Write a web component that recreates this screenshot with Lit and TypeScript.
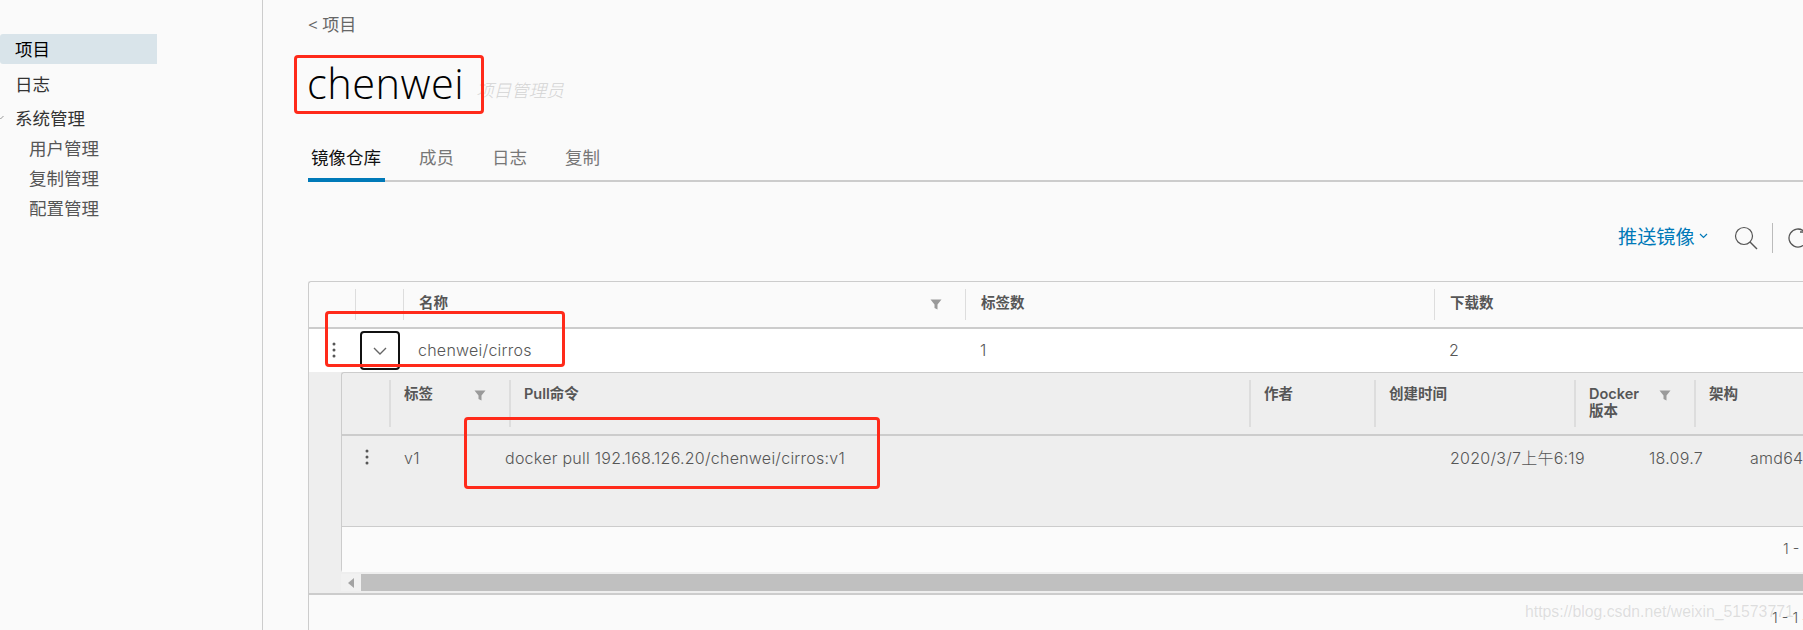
import { LitElement, html, css } from "lit";
import { customElement } from "lit/decorators.js";

const filter = html`<svg class="filter" width="12" height="12" viewBox="0 0 12 12"><path d="M0.5 1.5h11L7.5 6.5V11.5L4.5 10V6.5z" fill="#9a9a9a"/></svg>`;
const dots = html`<svg class="dots" width="4" height="16" viewBox="0 0 4 16"><circle cx="2" cy="2" r="1.5"/><circle cx="2" cy="8" r="1.5"/><circle cx="2" cy="14" r="1.5"/></svg>`;

@customElement("app-root")
export class AppRoot extends LitElement {
  static styles = css`
    :host {
      display: block;
      position: relative;
      width: 1803px;
      height: 630px;
      overflow: hidden;
      background: #fafafa;
      color: #565656;
      font-family: "Open Sans", "Noto Sans CJK SC", sans-serif;
    }
    .page { display: flex; height: 630px; }
    aside {
      flex: 0 0 262px;
      border-right: 1px solid #ccc;
      padding-top: 34px;
      font-size: 17.5px;
      color: #333;
    }
    .nav { height: 30px; width: 142px; padding-left: 15px; display: flex; align-items: center; position: relative; }
    .nav.active { background: #d9e4ea; border-radius: 3px 0 0 3px; color: #000; margin-bottom: 4px; height: 28px; padding-bottom: 2px; }
    .nav.gap { margin-bottom: 4px; height: 30px; }
    .nav.sub { padding-left: 29px; color: #565656; }
    .caret { position: absolute; left: -3px; top: 12px; }
    main { flex: 1; min-width: 0; padding-left: 45px; overflow: hidden; }
    .back { height: 46px; padding-bottom: 2px; display: flex; align-items: center; font-size: 17px; color: #666; }
    .title { height: 70px; display: flex; align-items: flex-start; }
    .title h1 { margin: 0 0 0 -1px; font-size: 41.5px; font-weight: 300; line-height: 70px; color: #000; letter-spacing: 0.5px; }
    .title em { font-size: 17.5px; line-height: 24px; font-weight: 300; color: #d4d4d4; margin: 30px 0 0 12px; }
    .tabs {
      display: flex;
      height: 62px;
      border-bottom: 2px solid #ccc;
      font-size: 17.5px;
      color: #777;
      align-items: stretch;
      margin-right: -4px;
    }
    .tab { padding: 26px 4px 0 3px; margin-right: 31px; }
    .tab.active { color: #111; border-bottom: 4px solid #0079b8; margin-bottom: -2px; margin-right: 31px; }
    .tools { height: 99px; position: relative; }
    .push { color: #0079b8; font-size: 19.2px; display: flex; align-items: center; gap: 4px; position: absolute; left: 1310px; top: 40px; }
    .toolicons { position: absolute; left: 1426px; top: 41px; display: flex; align-items: center; gap: 14px; }
    .vr { width: 1px; height: 30px; background: #bbb; }
    .table {
      width: 1600px;
      border: 1px solid #ccc;
      border-bottom: none;
      border-right: none;
      border-radius: 3px 0 0 0;
      height: 350px;
      font-family: "Inter", "Noto Sans CJK SC", sans-serif;
    }
    .outer-grid { display: grid; grid-template-columns: 46px 48px 562px 469px 1fr; }
    .inner-grid { display: grid; grid-template-columns: 47px 120px 740px 125px 200px 120px 1fr; }
    .head { height: 45px; font-weight: 700; font-size: 14.5px; color: #565656; border-bottom: 2px solid #ccc; }
    .hcell { margin: 7px 0; border-left: 1px solid #ddd; padding: 5px 23px 0 15px; display: flex; justify-content: space-between; line-height: 17px; }
    .hcell:first-child { border-left: none; }
    .hcell svg { margin-top: 4px; }
    .row { height: 43px; background: #fff; font-size: 16px; letter-spacing: 0.25px; font-weight: 300; align-items: center; padding-bottom: 2px; box-sizing: border-box; }
    .cell { padding-left: 15px; }
    .dots { fill: #565656; display: block; }
    .action { padding-left: 23px; }
    .toggle {
      box-sizing: border-box;
      margin-left: 5px;
      margin-top: 2px;
      width: 40px;
      height: 39px;
      border: 2px solid #111;
      border-radius: 4px;
      display: flex;
      align-items: center;
      justify-content: center;
    }
    .detail { background: #eee; padding-left: 32px; height: 223px; box-sizing: border-box; border-bottom: 2px solid #ccc; }
    .card { border: 1px solid #ccc; border-right: none; border-radius: 3px 0 0 3px; height: 200px; box-sizing: border-box; width: 1500px; }
    .ihead { height: 61px; font-weight: 600; font-size: 14.5px; border-bottom: 2px solid #ccc; }
    .ihead .hcell { border-left: 2px solid #ddd; padding-top: 5px; padding-left: 13px; }
    .ihead .hcell:first-child { border-left: none; }
    .irow { height: 91px; border-bottom: 1px solid #ccc; font-size: 16px; letter-spacing: 0.25px; font-weight: 300; padding-top: 13px; box-sizing: border-box; }
    .irow .cell { line-height: 18px; white-space: nowrap; }
    .irow .action { padding-left: 23px; }
    .cmd { margin-left: -4px; padding-left: 0 !important; }
    .c-time { padding-left: 76px !important; }
    .c-ver { padding-left: 75px !important; }
    .c-arch { padding-left: 56px !important; }
    .foot { height: 45px; background: #fbfbfb; font-size: 14.5px; font-weight: 300; padding: 10px 0 0 1441px; box-sizing: border-box; white-space: nowrap; }
    .bar { height: 17px; margin-top: 2px; display: flex; }
    .track { width: 20px; background: #f1f1f1; display: flex; align-items: center; justify-content: center; }
    .thumb { flex: 1; background: #c0c0c0; }
    .tfoot { font-size: 14.5px; font-weight: 300; padding: 11px 0 0 1463px; white-space: nowrap; }
    .mark { position: absolute; left: 1525px; top: 603px; font-size: 15.8px; color: rgba(120, 120, 120, 0.22); font-family: "Liberation Sans", sans-serif; }
    .red { position: absolute; border: 3px solid #ff2a1a; border-radius: 4px; box-sizing: border-box; }
    .r1 { left: 294px; top: 55px; width: 190px; height: 59px; }
    .r2 { left: 325px; top: 311px; width: 240px; height: 56px; }
    .r3 { left: 464px; top: 417px; width: 416px; height: 72px; }
  `;

  render() {
    return html`
      <div class="page">
        <aside>
          <div class="nav active">项目</div>
          <div class="nav gap">日志</div>
          <div class="nav">
            <svg class="caret" width="7" height="7" viewBox="0 0 7 7"><path d="M0.5 2l3 3 3-3" fill="none" stroke="#999" stroke-width="1"/></svg>系统管理
          </div>
          <div class="nav sub">用户管理</div>
          <div class="nav sub">复制管理</div>
          <div class="nav sub">配置管理</div>
        </aside>
        <main>
          <div class="back">&lt; 项目</div>
          <div class="title"><h1>chenwei</h1><em>项目管理员</em></div>
          <div class="tabs">
            <div class="tab active">镜像仓库</div>
            <div class="tab">成员</div>
            <div class="tab">日志</div>
            <div class="tab">复制</div>
          </div>
          <div class="tools">
            <div class="push">推送镜像
              <svg width="9" height="6" viewBox="0 0 9 6"><path d="M1 1l3.5 3.5L8 1" fill="none" stroke="#0079b8" stroke-width="1.2"/></svg>
            </div>
            <div class="toolicons">
              <svg width="24" height="24" viewBox="0 0 24 24"><circle cx="10" cy="10" r="8.5" fill="none" stroke="#555" stroke-width="1.2"/><path d="M16 16l7 7" stroke="#555" stroke-width="1.4"/></svg>
              <div class="vr"></div>
              <svg width="24" height="24" viewBox="0 0 24 24"><path d="M16.8 5.1A9 9 0 1 0 19.5 15" fill="none" stroke="#555" stroke-width="1.3"/><path d="M18 1v5h-5" fill="none" stroke="#555" stroke-width="1.3"/></svg>
            </div>
          </div>
          <div class="table">
            <div class="outer-grid head">
              <div class="hcell"></div>
              <div class="hcell"></div>
              <div class="hcell">名称 ${filter}</div>
              <div class="hcell">标签数</div>
              <div class="hcell">下载数</div>
            </div>
            <div class="outer-grid row">
              <div class="action">${dots}</div>
              <div><div class="toggle"><svg width="14" height="8" viewBox="0 0 14 8"><path d="M1 1l6 6 6-6" fill="none" stroke="#666" stroke-width="1.4"/></svg></div></div>
              <div class="cell">chenwei/cirros</div>
              <div class="cell">1</div>
              <div class="cell">2</div>
            </div>
            <div class="detail">
              <div class="card">
                <div class="inner-grid ihead">
                  <div class="hcell"></div>
                  <div class="hcell">标签 ${filter}</div>
                  <div class="hcell">Pull命令</div>
                  <div class="hcell">作者</div>
                  <div class="hcell">创建时间</div>
                  <div class="hcell"><span>Docker<br />版本</span> ${filter}</div>
                  <div class="hcell">架构 ${filter}</div>
                </div>
                <div class="inner-grid irow">
                  <div class="action">${dots}</div>
                  <div class="cell">v1</div>
                  <div class="cell cmd">docker pull 192.168.126.20/chenwei/cirros:v1</div>
                  <div class="cell"></div>
                  <div class="cell c-time">2020/3/7上午6:19</div>
                  <div class="cell c-ver">18.09.7</div>
                  <div class="cell c-arch">amd64</div>
                </div>
                <div class="foot">1 - 1 共计 1 条</div>
              </div>
              <div class="bar">
                <div class="track"><svg width="6" height="10" viewBox="0 0 6 10"><path d="M6 0v10L0 5z" fill="#a3a3a3"/></svg></div>
                <div class="thumb"></div>
              </div>
            </div>
            <div class="tfoot">1 - 1 共计 1 条</div>
          </div>
        </main>
      </div>
      <div class="mark">https://blog.csdn.net/weixin_51573771</div>
      <div class="red r1"></div>
      <div class="red r2"></div>
      <div class="red r3"></div>
    `;
  }
}
